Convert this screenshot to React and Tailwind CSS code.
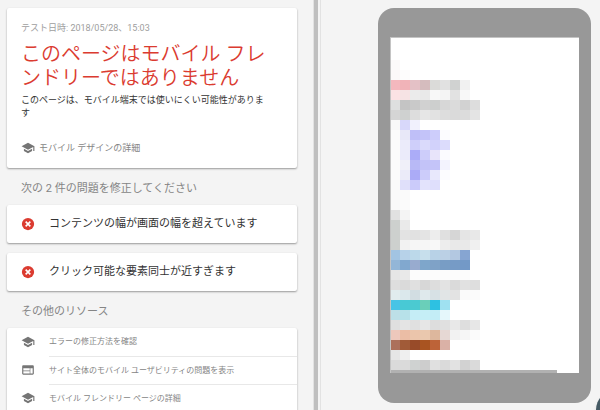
import { clsx } from 'clsx'
import { MdSchool, MdWeb } from 'react-icons/md'

const issues = [
  { id: 'content-width', label: 'コンテンツの幅が画面の幅を超えています' },
  { id: 'tap-targets', label: 'クリック可能な要素同士が近すぎます' },
]

const resources = [
  { label: 'エラーの修正方法を確認', href: '#fix', icon: MdSchool },
  { label: 'サイト全体のモバイル ユーザビリティの問題を表示', href: '#usability', icon: MdWeb },
  { label: 'モバイル フレンドリー ページの詳細', href: '#about', icon: MdSchool },
]

// rendered page preview, one hex colour per block
const previewRows = [
  'fcfafa',
  'fcf8f9 fdfcfc',
  'f4b8be f1b3b8 e4c1c6 d5bcbe dbdbd9 e1e1e1 d0d2d1 f1f1f1',
  'fbe2e4 f6e3e4 ebebeb e9e9e9 f8f8f8 f4f4f4 e2e2e2 f8f8f8',
  'dedfdf c4c4c4 c9c9c9 d1d1d1 cdcfce d7d7d7 dbdbdb d2d2d2 dddddd',
  'd5d5d5 cfd1d0 dddddd e6e6e6 e2e2e2 dddddd dadada dcdcdc e4e4e4',
  'f8f8f8 d8d8fa f1f1fd',
  'fbfbfb e8e8f8 bfbff8 c3c3f9 cdcdfb fcfcff',
  'fbfbfb ebebfa cfcffa dadafb d2d2fb dcdcfc',
  'fbfbfb ebebfa abacf8 cdcdfa e8e4fa fbfbff',
  'fbfbfb f0f0f9 b8b9f6 c3c3f8 c4c4f9 f3f3fe',
  'fbfbfb ebebf9 ababf7 ccccfa e8e8fc fcfcff',
  'fafafa e0e0fa cbcbfa e3e3fc dfdffc',
  'fafafa fafafa',
  'f9f9f9 fbfbfb',
  'e1e1e1 f4f4f4',
  'cdd0ce eaeaea',
  'cdd0ce e3e3e3 e1e1e1 e4e4e4 ededed e0e0e0 d6d6d6 e5e5e5 e8e8e8',
  'cdd0ce f2f2f2 f6f6f6 f6f6f6 f8f8f8 ededed e9e9e9 e9e9e9 f0f0f0',
  'a2c4e2 b7d2e9 bcd9ea c7dfec b8d2e7 bbd0e5 b3c8e1 86a5d2',
  '93b6d7 81a8cf 98abcf 7ea6cb 7fa2c7 789dc5 769bc6 7399c7',
  'e6e6e6 e9e9e9 fcfcfc fcfcfc fcfcfc fcfcfc fcfcfc fcfcfc',
  'dedede dadada e0e0e0 d7d7d7 dddddd e3e3e3 dadada e1e1e1 dedede',
  'e1ecee dbe8ec d2dde2 dfe9ec d7e1e5 e1e5e6 e3e3e3 fafafa fbfbfb',
  '48c4e6 48c9d5 4bcad1 6acfb9 2dc1e2 9fe1f1',
  'bddfe7 b7e1e9 c5edf6 c5eef6 c3edf6 e5f7fb',
  'dfdfdf e4e4e4 e0e0e0 e6e6e6 dddddd e0e0e0 e8e8e8 dedede e7e7e7',
  'edc8bc ebbda5 ebc5ab eac8ae ddb79d e6d8d4 f2f2f2 f6f6f6 fbfbfb',
  'ac705b a15b38 984b29 a95421 bd6338 dab1a6',
  'e6e6e6 efefef',
  'dadada dadada cfd2d1 cdcdcd e0e0e0 dadada e2e2e2 d2d2d2 dadada',
].map((row) => row.split(' '))

function ErrorIcon() {
  return (
    <svg viewBox="0 0 24 24" aria-hidden="true" className="size-3.5 shrink-0">
      <circle cx="12" cy="12" r="10.5" fill="#db3b30" />
      <path d="M8 8l8 8M16 8l-8 8" stroke="#fff" strokeWidth="2.8" />
    </svg>
  )
}

function Card({ className, children }) {
  return (
    <div className={clsx('rounded-xs bg-white shadow-[0_1px_2px_rgba(0,0,0,0.38)]', className)}>
      {children}
    </div>
  )
}

function SectionTitle({ children }) {
  return <h2 className="px-3.5 pt-[13px] pb-2 text-[11px] leading-4 text-[#858585]">{children}</h2>
}

function ResultPanel() {
  return (
    <main className="min-w-0 flex-1 pt-2 pr-4 pl-[7px]">
      <Card className="px-3.5 pt-3 pb-3">
        <p className="text-[9px] leading-4 text-[#9e9e9e]">テスト日時: 2018/05/28、15:03</p>
        <h1 className="mt-1.5 text-[20px] leading-6 font-[350] text-[#db3b30]">
          このページはモバイル フレ
          <br />
          ンドリーではありません
        </h1>
        <p className="mt-1 text-[9px] leading-[13px] text-[#333333]">
          このページは、モバイル端末では使いにくい可能性がありま
          <br />す
        </p>
        <a href="#design" className="mt-5 flex items-center gap-1 text-[9px] leading-4 text-[#858585]">
          <MdSchool className="size-3.5 text-[#757575]" />
          モバイル デザインの詳細
        </a>
      </Card>

      <SectionTitle>次の 2 件の問題を修正してください</SectionTitle>
      <div className="space-y-2.5">
        {issues.map((issue) => (
          <Card key={issue.id}>
            <a href={`#${issue.id}`} className="flex h-[38px] items-center gap-3.5 px-3.5 text-[11px] text-[#333333]">
              <ErrorIcon />
              {issue.label}
            </a>
          </Card>
        ))}
      </div>

      <SectionTitle>その他のリソース</SectionTitle>
      <Card>
        <ul>
          {resources.map((item, index) => (
            <li key={item.href}>
              <a href={item.href} className="flex items-center gap-3.5 pl-3.5 text-[8px] text-[#858585]">
                <item.icon className="size-3.5 shrink-0 text-[#757575]" />
                <span className={clsx('flex h-7 flex-1 items-center', index > 0 && 'border-t border-[#e8e8e8]')}>
                  {item.label}
                </span>
              </a>
            </li>
          ))}
        </ul>
      </Card>
    </main>
  )
}

function PhonePreview() {
  return (
    <div className="h-[395px] w-[213px] rounded-2xl bg-[#989898] px-3 pt-[29px] pb-[30px]">
      <div className="flex h-full flex-col justify-end border-t border-l border-[#c4c4c4] bg-white">
        {previewRows.map((row, y) => (
          <div key={y} className="flex h-2.5">
            {row.map((color, x) => (
              <div key={x} className="h-2.5 w-2.5 first:w-[9px]" style={{ backgroundColor: `#${color}` }} />
            ))}
          </div>
        ))}
        <div className="h-[3px] w-[166px] bg-[#b1b1b1]" />
      </div>
    </div>
  )
}

export default function App() {
  return (
    <div className="flex h-screen overflow-hidden bg-[#f4f4f4] font-['Roboto','Noto_Sans_CJK_JP',sans-serif]">
      <ResultPanel />
      <div className="flex w-2 shrink-0 border-x border-[#e2e2e2]">
        <div className="w-1 bg-[#bfbfbf]" />
      </div>
      <aside className="relative w-[279px] shrink-0 overflow-hidden pt-2 pl-[57px]">
        <PhonePreview />
        <button
          type="button"
          aria-label="フィードバック"
          className="absolute -right-9 -bottom-5 size-10 rounded-full bg-[#455a64] shadow-md"
        />
      </aside>
    </div>
  )
}
